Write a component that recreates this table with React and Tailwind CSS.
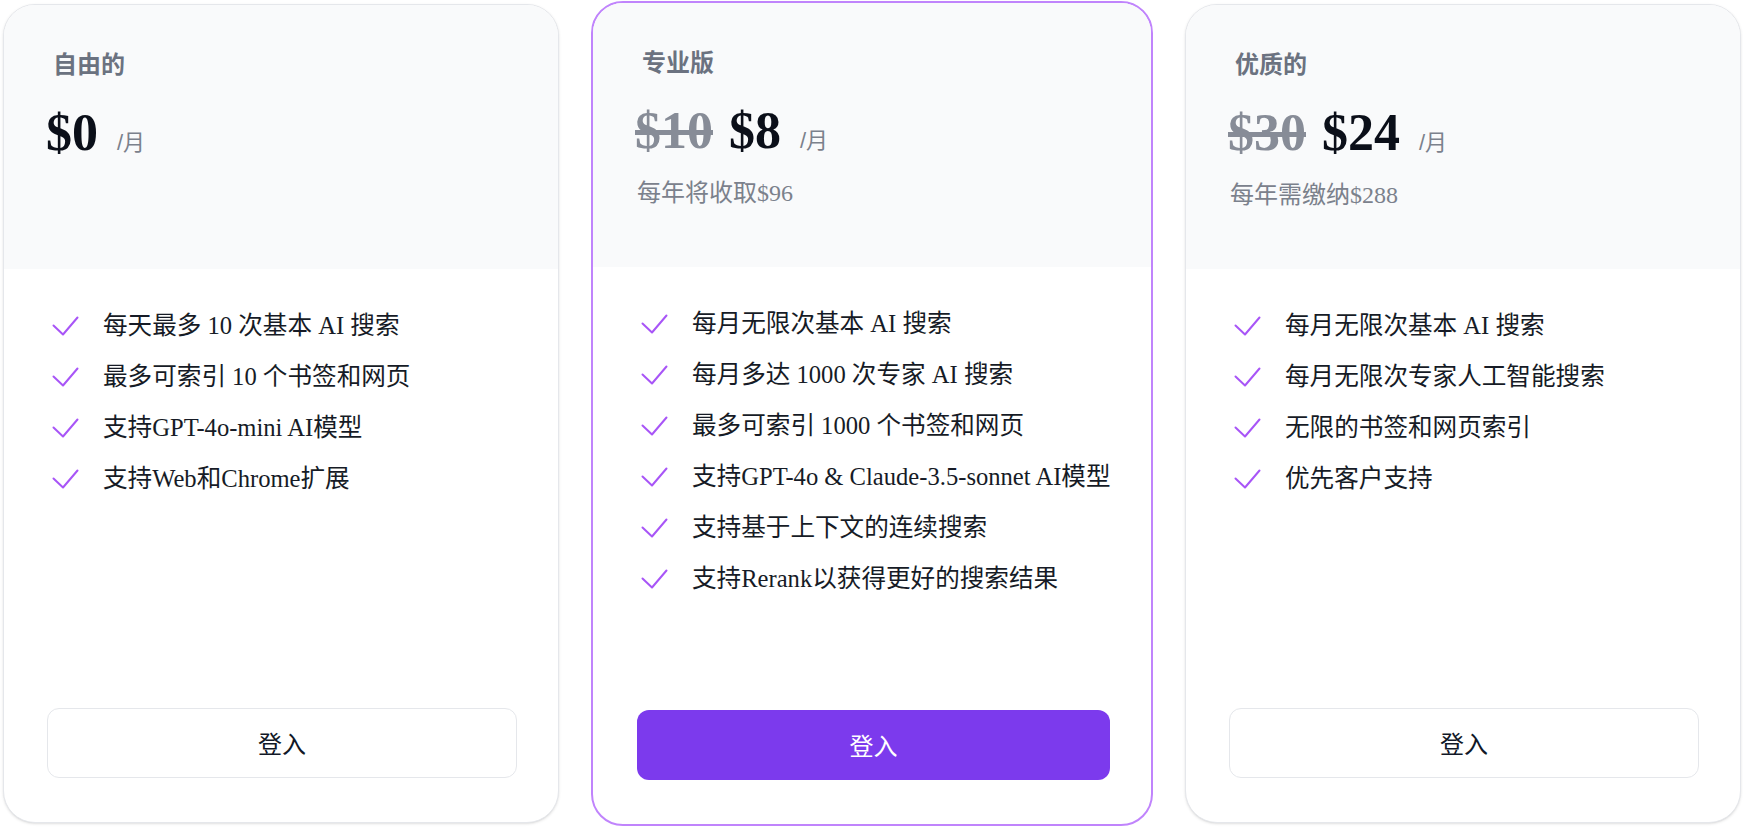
import React from "react";

const plans = [
  {
    name: "自由的",
    oldPrice: null,
    price: "$0",
    yearly: null,
    features: [
      "每天最多 10 次基本 AI 搜索",
      "最多可索引 10 个书签和网页",
      "支持GPT-4o-mini AI模型",
      "支持Web和Chrome扩展",
    ],
    featured: false,
  },
  {
    name: "专业版",
    oldPrice: "$10",
    price: "$8",
    yearly: "每年将收取$96",
    features: [
      "每月无限次基本 AI 搜索",
      "每月多达 1000 次专家 AI 搜索",
      "最多可索引 1000 个书签和网页",
      "支持GPT-4o & Claude-3.5-sonnet AI模型",
      "支持基于上下文的连续搜索",
      "支持Rerank以获得更好的搜索结果",
    ],
    featured: true,
  },
  {
    name: "优质的",
    oldPrice: "$30",
    price: "$24",
    yearly: "每年需缴纳$288",
    features: [
      "每月无限次基本 AI 搜索",
      "每月无限次专家人工智能搜索",
      "无限的书签和网页索引",
      "优先客户支持",
    ],
    featured: false,
  },
];

function CheckMark() {
  return (
    <svg width="27" height="20" viewBox="0 0 27 20" fill="none" className="shrink-0">
      <path
        d="M1.5 9.5 L11 18.5 L25.5 1.5"
        stroke="#a855f7"
        strokeWidth="2"
        strokeLinecap="round"
        strokeLinejoin="round"
      />
    </svg>
  );
}

function PlanCard({ plan }) {
  const cardClass = plan.featured
    ? "w-[562px] h-[825px] border-2 border-[#c084fc]"
    : "w-[556px] h-[819px] border border-gray-200 shadow-sm";

  return (
    <div className={`flex flex-col shrink-0 rounded-[32px] overflow-hidden bg-white ${cardClass}`}>
      <div className="h-[264px] shrink-0 bg-[#f9fafb] pl-[42px] pr-11 pt-[42px]">
        <h3 className="ml-[7px] text-[24px] leading-8 font-bold text-[#6b7280] font-['Noto_Sans_CJK_SC',sans-serif]">
          {plan.name}
        </h3>
        <div className="mt-[28px] flex items-baseline">
          {plan.oldPrice && (
            <span className="mr-4 text-[52px] leading-[52px] font-bold text-[#878c97] line-through font-['Liberation_Serif',serif]">
              {plan.oldPrice}
            </span>
          )}
          <span className="text-[52px] leading-[52px] font-bold text-[#0b0f19] font-['Liberation_Serif',serif]">
            {plan.price}
          </span>
          <span className="ml-[19px] text-[22px] text-[#7b818c] font-['Liberation_Sans','Noto_Sans_CJK_SC',sans-serif]">
            /月
          </span>
        </div>
        <p className="mt-[20px] ml-[2px] text-[24px] leading-8 text-[#7b818c] font-['Liberation_Serif','Noto_Sans_CJK_SC',serif]">
          {plan.yearly}
        </p>
      </div>

      <ul className="flex flex-col gap-[19px] pl-12 pt-[41px]">
        {plan.features.map((f) => (
          <li key={f} className="flex items-center gap-[24px]">
            <CheckMark />
            <span className="whitespace-nowrap text-[24.6px] leading-8 text-[#161b26] font-['Liberation_Serif','Noto_Sans_CJK_SC',serif]">
              {f}
            </span>
          </li>
        ))}
      </ul>

      <button
        className={
          plan.featured
            ? "mt-auto ml-11 mr-[41px] mb-11 h-[70px] rounded-xl bg-[#7c3aed] text-white text-[24px] font-['Noto_Sans_CJK_SC',sans-serif]"
            : "mt-auto ml-[43px] mr-[41px] mb-11 h-[70px] rounded-xl border border-gray-200 bg-white text-[#111827] text-[24px] font-['Noto_Sans_CJK_SC',sans-serif]"
        }
      >
        登入
      </button>
    </div>
  );
}

export default function App() {
  return (
    <div className="min-h-screen bg-white">
      <div className="flex h-[827px] items-center gap-[32px] pl-[3px]">
        {plans.map((p) => (
          <PlanCard key={p.name} plan={p} />
        ))}
      </div>
    </div>
  );
}
